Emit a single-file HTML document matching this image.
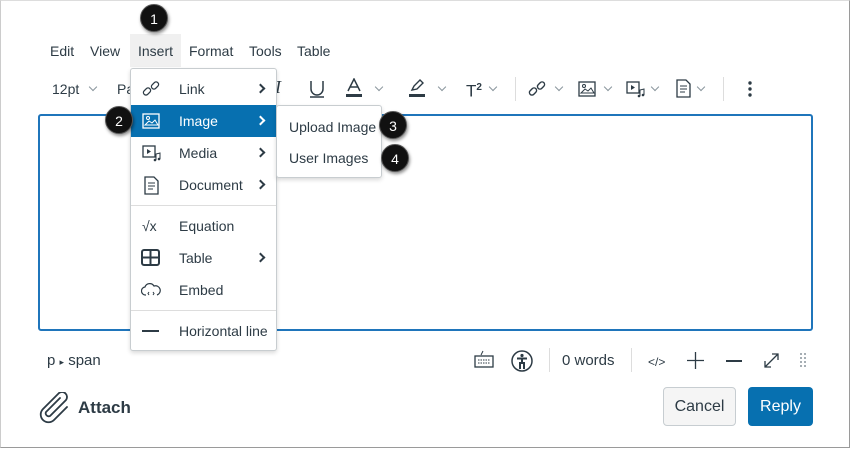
<!DOCTYPE html>
<html><head><meta charset="utf-8">
<style>
*{box-sizing:border-box;margin:0;padding:0}
body{width:851px;height:449px;background:#fff;font-family:"Liberation Sans",sans-serif;color:#2d3b45;position:relative;overflow:hidden;font-size:14px}
.frame{position:absolute;left:0;top:0;width:850px;height:448px;border:1px solid #9a9a9a;border-top-color:#ddd;border-left-color:#ccc}
.a{position:absolute;white-space:nowrap}
.t{position:absolute;white-space:nowrap;line-height:16px}
.badge{position:absolute;width:28px;height:28px;border-radius:50%;background:#111;color:#fff;font-size:14px;line-height:28px;text-align:center;box-shadow:1px 2px 3px rgba(0,0,0,.45);border:1px solid #555}
.chev{position:absolute;width:6px;height:6px;border-right:1px solid #8a959c;border-bottom:1px solid #8a959c;transform:rotate(45deg)}
.rchev{position:absolute;width:7px;height:7px;border-right:2px solid #2d3b45;border-top:2px solid #2d3b45;transform:rotate(45deg)}
.sep{position:absolute;width:1px;background:#ddd}
</style></head><body>
<div class="frame"></div>

<div class="a" style="left:130px;top:34px;width:51px;height:33px;background:#f0f0f0"></div>
<div class="t" style="left:50px;top:43px">Edit</div>
<div class="t" style="left:90px;top:43px">View</div>
<div class="t" style="left:138px;top:43px">Insert</div>
<div class="t" style="left:189px;top:43px">Format</div>
<div class="t" style="left:249px;top:43px">Tools</div>
<div class="t" style="left:297px;top:43px">Table</div>
<div class="badge" style="left:140px;top:4px">1</div>

<div class="t" style="left:52px;top:81px">12pt</div>
<div class="chev" style="left:90px;top:84px"></div>
<div class="t" style="left:117px;top:81px">Pa</div>
<div class="t" style="left:275px;top:79px;font-size:18px;font-style:italic;font-family:'Liberation Serif',serif">I</div>
<svg class="a" style="left:308px;top:79px" width="18" height="20"><path d="M3 2v8a6 6 0 0 0 12 0V2" fill="none" stroke="#2d3b45" stroke-width="1.5"/><path d="M2 18h14" stroke="#2d3b45" stroke-width="1.5"/></svg>
<svg class="a" style="left:345px;top:78px" width="18" height="20"><path d="M3 13L9 1l6 12M5 9h8" fill="none" stroke="#2d3b45" stroke-width="1.5"/><rect x="1" y="16" width="16" height="3" fill="#2d3b45"/></svg>
<div class="chev" style="left:376px;top:84px"></div>
<svg class="a" style="left:408px;top:78px" width="18" height="20"><path d="M4 12l2-4 6-6 3 3-6 6z" fill="none" stroke="#2d3b45" stroke-width="1.4"/><rect x="1" y="16" width="16" height="3" fill="#2d3b45"/></svg>
<div class="chev" style="left:439px;top:84px"></div>
<div class="t" style="left:466px;top:80px;font-size:17px">T<sup style="font-size:10px;font-weight:bold">2</sup></div>
<div class="chev" style="left:490px;top:84px"></div>
<div class="sep" style="left:515px;top:77px;height:24px"></div>
<svg class="a" style="left:528px;top:80px" width="18" height="18"><g fill="none" stroke="#2d3b45" stroke-width="1.4"><rect x="1" y="9" width="8" height="5" rx="2.5" transform="rotate(-45 5 11.5)"/><rect x="9" y="3" width="8" height="5" rx="2.5" transform="rotate(-45 13 5.5)"/></g></svg>
<div class="chev" style="left:556px;top:84px"></div>
<svg class="a" style="left:578px;top:81px" width="18" height="16"><rect x="1" y="1" width="16" height="14" fill="none" stroke="#2d3b45" stroke-width="1.3"/><path d="M3 12l4-4 3 2 3-3 3 5z" fill="none" stroke="#2d3b45"/><circle cx="6" cy="5" r="1.5" fill="none" stroke="#2d3b45"/></svg>
<div class="chev" style="left:605px;top:84px"></div>
<svg class="a" style="left:626px;top:81px" width="20" height="17"><rect x="1" y="1" width="12" height="11" fill="none" stroke="#2d3b45" stroke-width="1.3"/><path d="M5 4v5l4-2.5z" fill="#2d3b45"/><path d="M14 15V9l4-1v6" fill="none" stroke="#2d3b45"/><circle cx="13" cy="15" r="1.3" fill="#2d3b45"/><circle cx="17" cy="14" r="1.3" fill="#2d3b45"/></svg>
<div class="chev" style="left:652px;top:84px"></div>
<svg class="a" style="left:676px;top:79px" width="15" height="19"><path d="M1 1h9l4 4v13H1z" fill="none" stroke="#2d3b45" stroke-width="1.3"/><path d="M4 7h7M4 10h7M4 13h5" stroke="#2d3b45"/></svg>
<div class="chev" style="left:698px;top:84px"></div>
<div class="sep" style="left:723px;top:77px;height:24px"></div>
<svg class="a" style="left:747px;top:80px" width="6" height="18"><circle cx="3" cy="3" r="1.7" fill="#2d3b45"/><circle cx="3" cy="9" r="1.7" fill="#2d3b45"/><circle cx="3" cy="15" r="1.7" fill="#2d3b45"/></svg>

<div class="a" style="left:38px;top:114px;width:775px;height:217px;border:2px solid #1f75bb;border-radius:3px"></div>

<div class="a" style="left:130px;top:68px;width:147px;height:283px;background:#fff;border:1px solid #c8cdd0;border-radius:3px;box-shadow:0 2px 4px rgba(0,0,0,.15)"></div>
<div class="a" style="left:131px;top:105px;width:145px;height:32px;background:#0770b0"></div>
<svg class="a" style="left:142px;top:80px" width="18" height="18"><g fill="none" stroke="#2d3b45" stroke-width="1.3"><rect x="1" y="9" width="8" height="5" rx="2.5" transform="rotate(-45 5 11.5)"/><rect x="9" y="3" width="8" height="5" rx="2.5" transform="rotate(-45 13 5.5)"/></g></svg>
<div class="t" style="left:179px;top:81px">Link</div>
<div class="rchev" style="left:257px;top:85px"></div>
<svg class="a" style="left:142px;top:113px" width="18" height="16"><rect x="1" y="1" width="16" height="14" fill="none" stroke="#fff" stroke-width="1.3"/><path d="M3 12l4-4 3 2 3-3 3 5z" fill="none" stroke="#fff"/><circle cx="6" cy="5" r="1.5" fill="none" stroke="#fff"/></svg>
<div class="t" style="left:179px;top:113px;color:#fff">Image</div>
<div class="rchev" style="left:257px;top:117px;border-color:#fff"></div>
<svg class="a" style="left:142px;top:145px" width="20" height="17"><rect x="1" y="1" width="12" height="11" fill="none" stroke="#2d3b45" stroke-width="1.3"/><path d="M5 4v5l4-2.5z" fill="#2d3b45"/><path d="M14 15V9l4-1v6" fill="none" stroke="#2d3b45"/><circle cx="13" cy="15" r="1.3" fill="#2d3b45"/><circle cx="17" cy="14" r="1.3" fill="#2d3b45"/></svg>
<div class="t" style="left:179px;top:145px">Media</div>
<div class="rchev" style="left:257px;top:149px"></div>
<svg class="a" style="left:144px;top:176px" width="15" height="19"><path d="M1 1h9l4 4v13H1z" fill="none" stroke="#2d3b45" stroke-width="1.3"/><path d="M4 7h7M4 10h7M4 13h5" stroke="#2d3b45"/></svg>
<div class="t" style="left:179px;top:177px">Document</div>
<div class="rchev" style="left:257px;top:181px"></div>
<div class="a" style="left:131px;top:205px;width:145px;height:1px;background:#ddd"></div>
<div class="t" style="left:142px;top:218px;font-size:14px">√x</div>
<div class="t" style="left:179px;top:218px">Equation</div>
<svg class="a" style="left:141px;top:249px" width="19" height="17"><rect x="1" y="1" width="17" height="15" rx="2" fill="none" stroke="#2d3b45" stroke-width="2"/><path d="M1 8.5h17M9.5 1v15" stroke="#2d3b45" stroke-width="2"/></svg>
<div class="t" style="left:179px;top:250px">Table</div>
<div class="rchev" style="left:257px;top:254px"></div>
<svg class="a" style="left:141px;top:282px" width="20" height="16"><path d="M5 13a4 4 0 0 1-1-8 5 5 0 0 1 9-1 4 4 0 0 1 3 9" fill="none" stroke="#2d3b45" stroke-width="1.2"/><path d="M8 10l-1 1.5L8 13M12 10l1 1.5-1 1.5" fill="none" stroke="#2d3b45"/></svg>
<div class="t" style="left:179px;top:282px">Embed</div>
<div class="a" style="left:131px;top:310px;width:145px;height:1px;background:#ddd"></div>
<div class="a" style="left:142px;top:330px;width:17px;height:2px;background:#2d3b45"></div>
<div class="t" style="left:179px;top:323px">Horizontal line</div>
<div class="badge" style="left:105px;top:106px">2</div>

<div class="a" style="left:276px;top:105px;width:106px;height:73px;background:#fff;border:1px solid #c8cdd0;border-radius:3px;box-shadow:0 2px 4px rgba(0,0,0,.15)"></div>
<div class="t" style="left:289px;top:119px">Upload Image</div>
<div class="t" style="left:289px;top:150px">User Images</div>
<div class="badge" style="left:379px;top:111px">3</div>
<div class="badge" style="left:381px;top:144px">4</div>

<div class="t" style="left:47px;top:353px;font-size:15px">p <span style="font-size:9px">▸</span> span</div>
<svg class="a" style="left:474px;top:350px" width="20" height="18"><path d="M7 5l2-4" stroke="#2d3b45"/><rect x="1" y="6" width="18" height="11" fill="none" stroke="#2d3b45" stroke-width="1.3"/><path d="M4 10h12M4 13h12" stroke="#2d3b45" stroke-dasharray="1.5 1"/></svg>
<svg class="a" style="left:511px;top:350px" width="22" height="22"><circle cx="11" cy="11" r="10" fill="none" stroke="#2d3b45" stroke-width="1.5"/><circle cx="11" cy="5.5" r="1.6" fill="#2d3b45"/><path d="M6 8.5h10M11 8.5v5M9 19v-6h4v6" fill="none" stroke="#2d3b45" stroke-width="2"/></svg>
<div class="sep" style="left:549px;top:348px;height:24px"></div>
<div class="t" style="left:562px;top:353px;font-size:15px">0 words</div>
<div class="sep" style="left:631px;top:348px;height:24px"></div>
<div class="t" style="left:648px;top:354px;font-size:12px">&lt;/&gt;</div>
<svg class="a" style="left:687px;top:352px" width="17" height="17"><path d="M8.5 0v17M0 8.5h17" stroke="#2d3b45" stroke-width="1.3"/></svg>
<div class="a" style="left:726px;top:360px;width:16px;height:2px;background:#2d3b45"></div>
<svg class="a" style="left:763px;top:352px" width="17" height="17"><path d="M2 15L15 2M9 2h6v6M2 9v6h6" fill="none" stroke="#2d3b45" stroke-width="1.3"/></svg>
<svg class="a" style="left:799px;top:352px" width="8" height="16"><g fill="#8a959c"><circle cx="2" cy="2" r="1"/><circle cx="6" cy="2" r="1"/><circle cx="2" cy="6" r="1"/><circle cx="6" cy="6" r="1"/><circle cx="2" cy="10" r="1"/><circle cx="6" cy="10" r="1"/><circle cx="2" cy="14" r="1"/><circle cx="6" cy="14" r="1"/></g></svg>

<svg class="a" style="left:38px;top:392px" width="34" height="32"><path d="M22 6L8 20a3 3 0 0 0 4 4l16-16a5 5 0 0 0-7-7L5 17a7.5 7.5 0 0 0 11 11l13-13" fill="none" stroke="#2d3b45" stroke-width="1.8" stroke-linecap="round"/></svg>
<div class="t" style="left:78px;top:400px;font-size:17px;font-weight:bold">Attach</div>

<div class="a" style="left:663px;top:387px;width:73px;height:39px;background:#f5f5f5;border:1px solid #c7cdd1;border-radius:4px;font-size:16px;line-height:37px;text-align:center">Cancel</div>
<div class="a" style="left:748px;top:387px;width:65px;height:39px;background:#0770b0;border-radius:4px;color:#fff;font-size:16px;line-height:39px;text-align:center">Reply</div>
</body></html>
